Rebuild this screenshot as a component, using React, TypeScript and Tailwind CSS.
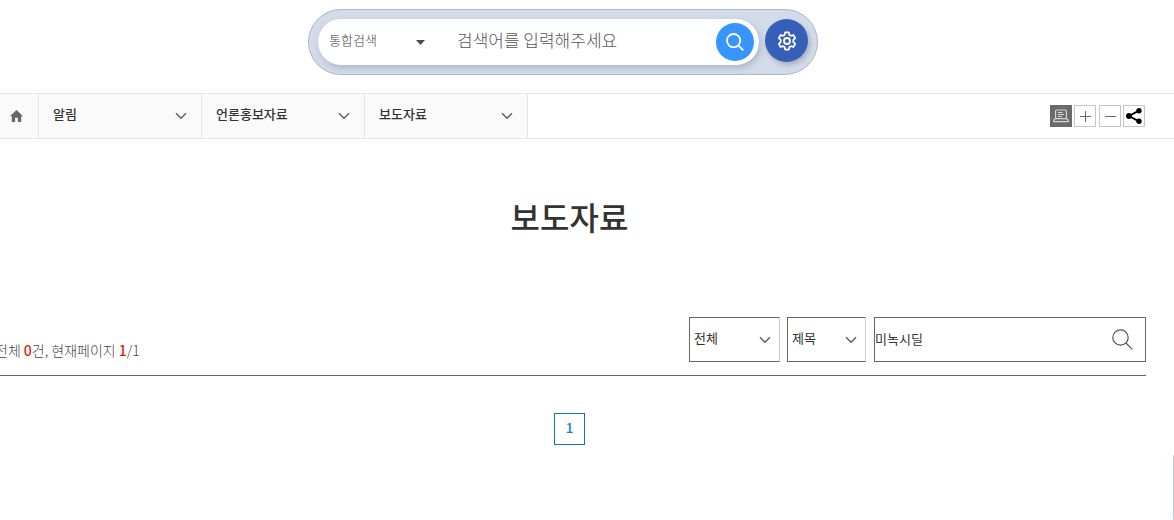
import React from "react";

function Chevron({ className = "" }: { className?: string }) {
  return (
    <svg className={className} width="12" height="8" viewBox="0 0 12 8" fill="none" stroke="#5c5c5c" strokeWidth="1.4" aria-hidden="true">
      <path d="M1 1.2 6 6.2 11 1.2" />
    </svg>
  );
}

function SiteSearch() {
  return (
    <form className="flex justify-center pt-[9px] pr-12 pb-[18px]" onSubmit={(e) => e.preventDefault()}>
      <div className="flex h-[66px] w-[510px] items-center gap-1.5 rounded-full border border-[#a9b6ce] bg-[#d4dbe8] px-[9px]">
        <div className="flex h-[46px] flex-1 items-center rounded-full bg-white pr-[5px] pl-[11px] shadow-[2px_3px_6px_rgba(60,75,110,0.25)]">
          <div className="relative flex w-24 items-center">
            <select aria-label="검색 범위" className="w-full appearance-none bg-transparent pb-1 text-[13px] leading-5 font-light text-[#444] outline-none">
              <option>통합검색</option>
            </select>
            <svg className="pointer-events-none absolute right-0" width="9" height="5" viewBox="0 0 9 5" aria-hidden="true">
              <path d="M0 0h9L4.5 5z" fill="#4d4d4d" />
            </svg>
          </div>
          <input
            type="text"
            aria-label="통합검색어"
            placeholder="검색어를 입력해주세요"
            className="ml-8 min-w-0 flex-1 bg-transparent pb-1 text-[17px] leading-6 font-light outline-none placeholder:text-[#555]"
          />
          <button type="submit" aria-label="검색" className="flex size-[38px] items-center justify-center rounded-full bg-[#3795ff]">
            <svg width="18" height="18" viewBox="0 0 18 18" fill="none" stroke="#fff" strokeWidth="1.8" strokeLinecap="round" aria-hidden="true">
              <circle cx="7.6" cy="7.6" r="6.6" />
              <path d="m12.6 12.6 4.2 4.2" />
            </svg>
          </button>
        </div>
        <button type="button" aria-label="검색 설정" className="mb-[3px] flex size-[43px] items-center justify-center rounded-full bg-[#365fb8] shadow-[2px_3px_5px_rgba(60,75,110,0.3)]">
          <svg width="20" height="20" viewBox="0 0 20 20" fill="none" stroke="#fff" strokeWidth="1.8" strokeLinejoin="round" aria-hidden="true">
            <path d="M8.2 1.4h3.6l.6 2.5 1.5.9 2.5-.8 1.8 3.1-1.9 1.8v2.2l1.9 1.8-1.8 3.1-2.5-.8-1.5.9-.6 2.5H8.200l-.6-2.5-1.5-.9-2.5.8-1.8-3.1 1.900-1.800V8.900L1.800 7.100 3.600 4l2.500.8 1.500-.9z" />
            <circle cx="10" cy="10" r="3" />
          </svg>
        </button>
      </div>
    </form>
  );
}

const crumbs = ["알림", "언론홍보자료", "보도자료"];

function Breadcrumbs() {
  return (
    <div className="flex h-[46px] items-stretch justify-between border-y border-[#e5e5e5] pr-[29px]">
      <nav aria-label="현재 위치" className="flex bg-[#fafafa]">
        <a href="#home" aria-label="홈" className="flex w-[39px] items-center border-r border-[#e5e5e5] pl-2.5">
          <svg width="13" height="12" viewBox="0 0 13 12" fill="#666" aria-hidden="true">
            <path d="M6.500 0 13 6.200h-1.800V12H7.900V7.800H5.100V12H1.800V6.200H0z" />
          </svg>
        </a>
        {crumbs.map((name) => (
          <button key={name} type="button" className="flex w-[163px] items-center justify-between border-r border-[#e5e5e5] px-3.5 text-[13px] font-medium text-[#333]">
            <span className="pb-1">{name}</span>
            <Chevron />
          </button>
        ))}
      </nav>
      <div className="flex items-center gap-0.5">
        <button type="button" aria-label="인쇄" className="flex size-[22px] items-center justify-center bg-[#6b6b6b]">
          <svg width="16" height="14" viewBox="0 0 16 14" fill="none" stroke="#d8d8d8" strokeWidth="1.2" aria-hidden="true">
            <path d="M2.600 9.500V2.200q0-1.200 1.200-1.200h8.400q1.200 0 1.200 1.200v7.300M2.600 9.600.8 11v1.600h14.400V11l-1.800-1.400zM5 3.500h4.500M5 5.500h6M5 7.500h4" />
          </svg>
        </button>
        <button type="button" aria-label="글자 확대" className="flex size-[22px] items-center justify-center border border-[#c6c6c6]">
          <svg width="11" height="11" viewBox="0 0 11 11" stroke="#666" aria-hidden="true"><path d="M0 5.500h11M5.500 0v11" /></svg>
        </button>
        <button type="button" aria-label="글자 축소" className="ml-px flex size-[22px] items-center justify-center border border-[#c6c6c6]">
          <svg width="11" height="11" viewBox="0 0 11 11" stroke="#666" aria-hidden="true"><path d="M0 5.500h11" /></svg>
        </button>
        <button type="button" aria-label="공유" className="flex size-[22px] items-center justify-center border border-[#c6c6c6]">
          <svg width="16" height="16" viewBox="0 0 16 16" aria-hidden="true">
            <path d="M13 2.600 3 8l10 5.400" fill="none" stroke="#000" strokeWidth="1.800" />
            <circle cx="13" cy="2.700" r="2.700" /><circle cx="2.900" cy="8" r="2.900" /><circle cx="13" cy="13.300" r="2.700" />
          </svg>
        </button>
      </div>
    </div>
  );
}

function FilterSelect({ label, value, className }: { label: string; value: string; className: string }) {
  return (
    <div className={`relative flex items-center ${className}`}>
      <select aria-label={label} className="h-full w-full appearance-none border border-[#666] border-r-[#ccc] bg-white pb-[3px] pl-1 text-[13px] font-normal text-[#333] outline-none">
        <option>{value}</option>
      </select>
      <Chevron className="pointer-events-none absolute right-[9px]" />
    </div>
  );
}

export default function App() {
  return (
    <div className="relative min-h-screen overflow-hidden bg-white font-['Noto_Sans_CJK_KR','Noto_Sans',sans-serif] text-[#333]">
      <SiteSearch />
      <Breadcrumbs />
      <main className="mr-7 -ml-[7px]">
        <h1 className="pt-[53px] text-center text-[32px] leading-[48px] font-medium">보도자료</h1>
        <div className="mt-[77px] flex items-end justify-between border-b border-[#666] pb-[13px]">
          <p className="pb-0.5 pl-0.5 text-[14px] leading-5 font-light text-[#444]">
            전체 <strong className="font-medium text-[#d4290a]">0</strong>건, 현재페이지 <strong className="font-medium text-[#d4290a]">1</strong>/1
          </p>
          <form className="flex h-[45px]" onSubmit={(e) => e.preventDefault()}>
            <FilterSelect label="분류" value="전체" className="mr-[7px] w-[91px]" />
            <FilterSelect label="검색 항목" value="제목" className="mr-2 w-[79px]" />
            <div className="flex w-[272px] items-center border border-[#666] pr-3">
              <input type="text" aria-label="검색어" defaultValue="미녹시딜" className="h-full min-w-0 flex-1 bg-transparent pb-[3px] text-[13px] text-[#333] outline-none" />
              <button type="submit" aria-label="검색">
                <svg width="21" height="21" viewBox="0 0 21 21" fill="none" stroke="#555" strokeWidth="1.200" aria-hidden="true">
                  <circle cx="8.500" cy="8.500" r="7.700" />
                  <path d="m14 14 6.300 6.300" />
                </svg>
              </button>
            </div>
          </form>
        </div>
        <nav aria-label="페이지" className="flex justify-center pt-[37px]">
          <a href="#page-1" aria-current="page" className="flex h-8 w-[31px] items-center justify-center border border-[#0f76bd] pb-1 text-[14px] font-medium text-[#0f86c8]">1</a>
        </nav>
      </main>
      <div className="absolute right-0 bottom-0 h-[65px] w-px bg-[#c5d0da] shadow-[0_0_8px_rgba(0,0,0,0.2)]" />
    </div>
  );
}
